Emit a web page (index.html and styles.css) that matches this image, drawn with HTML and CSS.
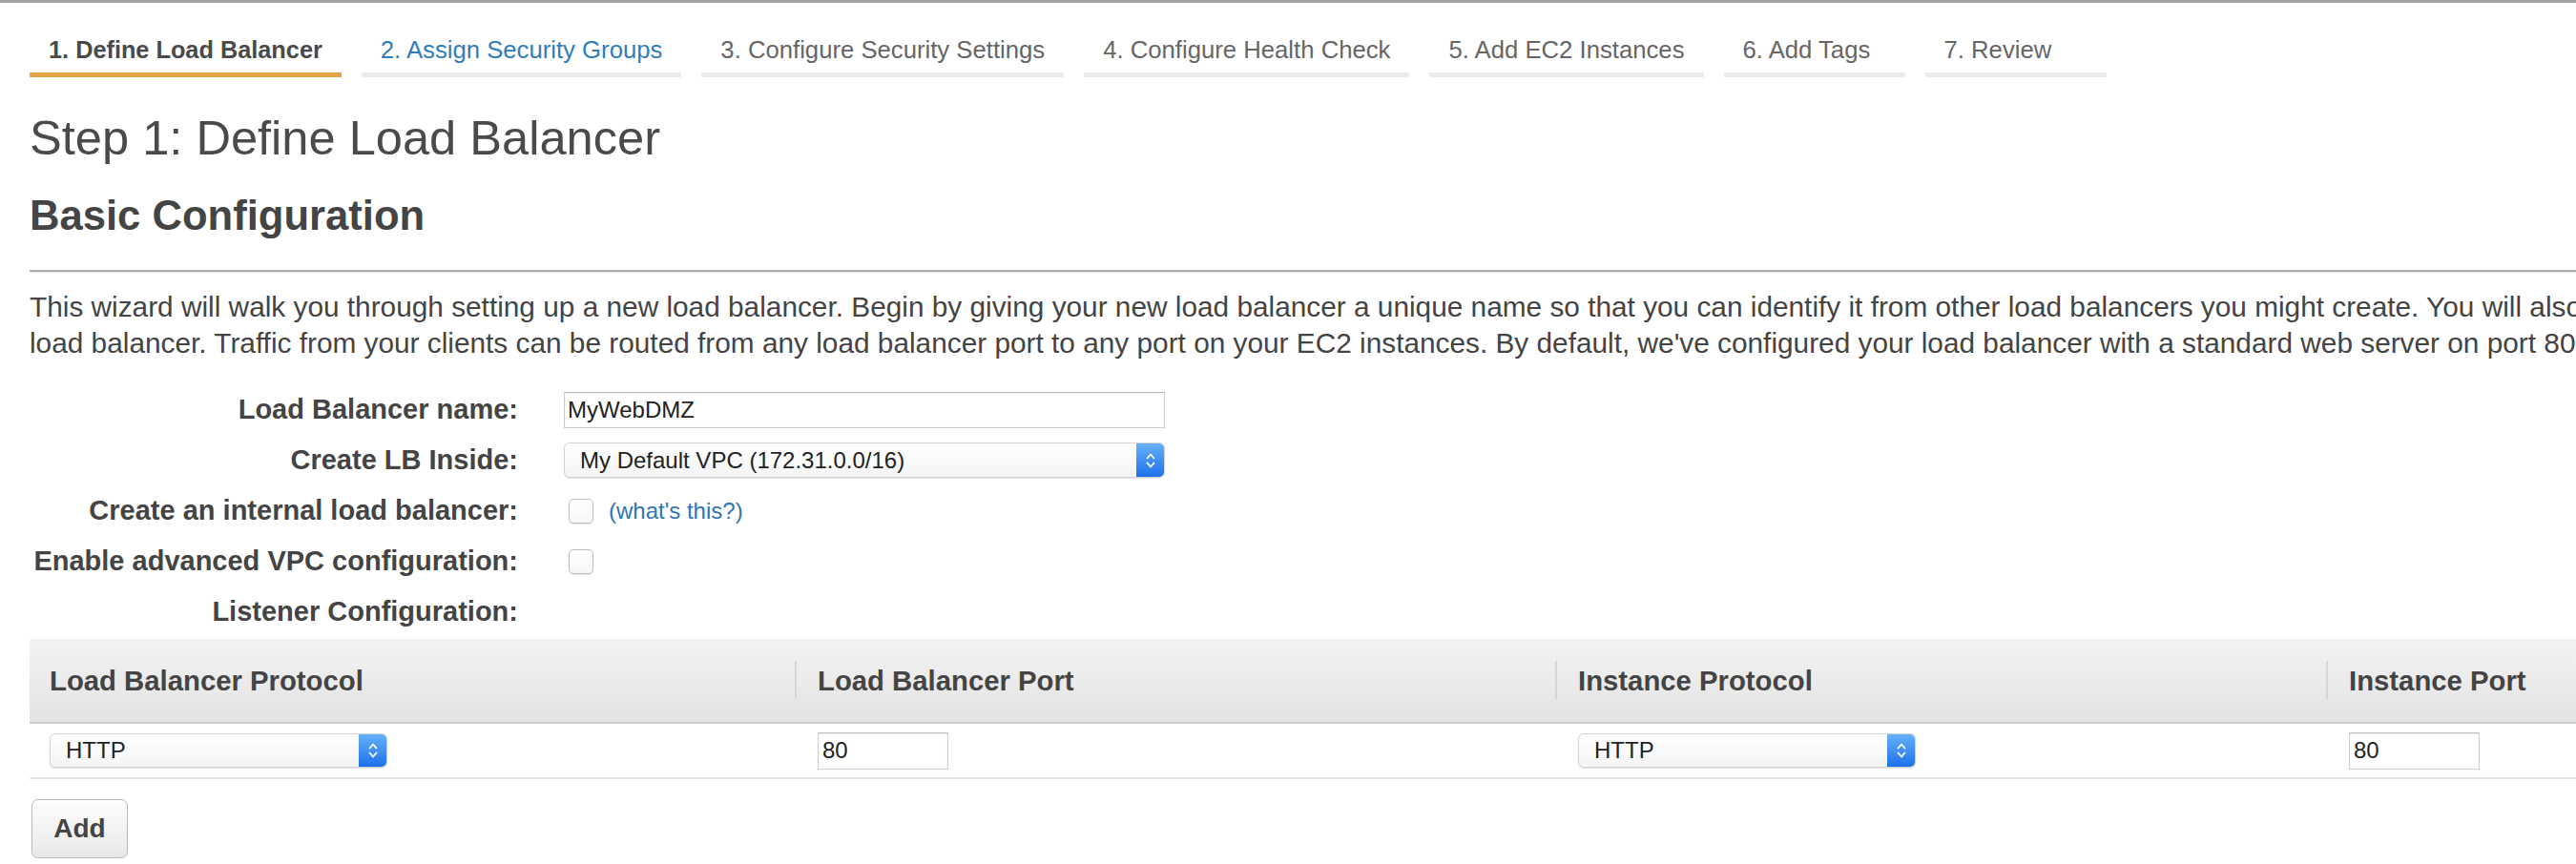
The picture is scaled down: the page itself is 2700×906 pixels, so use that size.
FILE: index.html
```html
<!DOCTYPE html>
<html lang="en">
<head>
<meta charset="utf-8">
<title>Define Load Balancer</title>
<link rel="stylesheet" href="styles.css">
</head>
<body>
<div class="topbar"></div>
<div class="page">
  <nav class="tabs">
    <div class="tab active">1. Define Load Balancer</div>
    <div class="tab link">2. Assign Security Groups</div>
    <div class="tab">3. Configure Security Settings</div>
    <div class="tab">4. Configure Health Check</div>
    <div class="tab">5. Add EC2 Instances</div>
    <div class="tab">6. Add Tags</div>
    <div class="tab">7. Review</div>
  </nav>

  <h1 class="title">Step 1: Define Load Balancer</h1>
  <h2 class="section-title">Basic Configuration</h2>
  <hr class="rule">

  <p class="intro">This wizard will walk you through setting up a new load balancer. Begin by giving your new load balancer a unique name so that you can identify it from other load balancers you might create. You will also need to configure ports and protocols for your<br>load balancer. Traffic from your clients can be routed from any load balancer port to any port on your EC2 instances. By default, we've configured your load balancer with a standard web server on port 80.</p>

  <div class="form">
    <label class="label" for="lbname">Load Balancer name:</label>
    <div class="control"><input id="lbname" class="textbox" type="text" value="MyWebDMZ"></div>

    <div class="label">Create LB Inside:</div>
    <div class="control">
      <div class="select wide"><span class="value">My Default VPC (172.31.0.0/16)</span><span class="stepper"><svg width="14" height="24" viewBox="0 0 14 24"><path d="M3.5 9.5 L7 5.5 L10.5 9.5 M3.5 14.5 L7 18.5 L10.5 14.5" fill="none" stroke="#fff" stroke-width="1.8" stroke-linecap="round" stroke-linejoin="round"/></svg></span></div>
    </div>

    <div class="label">Create an internal load balancer:</div>
    <div class="control"><input class="checkbox" type="checkbox"><a class="help" href="#">(what's this?)</a></div>

    <div class="label">Enable advanced VPC configuration:</div>
    <div class="control"><input class="checkbox" type="checkbox"></div>

    <div class="label">Listener Configuration:</div>
    <div class="control"></div>
  </div>

  <table class="listeners">
    <colgroup>
      <col class="c1"><col class="c2"><col class="c3"><col class="c4">
    </colgroup>
    <thead>
      <tr>
        <th>Load Balancer Protocol</th>
        <th>Load Balancer Port</th>
        <th>Instance Protocol</th>
        <th>Instance Port</th>
      </tr>
    </thead>
    <tbody>
      <tr>
        <td><div class="select small"><span class="value">HTTP</span><span class="stepper"><svg width="14" height="24" viewBox="0 0 14 24"><path d="M3.5 9.5 L7 5.5 L10.5 9.5 M3.5 14.5 L7 18.5 L10.5 14.5" fill="none" stroke="#fff" stroke-width="1.8" stroke-linecap="round" stroke-linejoin="round"/></svg></span></div></td>
        <td><input class="port" type="text" value="80"></td>
        <td><div class="select small"><span class="value">HTTP</span><span class="stepper"><svg width="14" height="24" viewBox="0 0 14 24"><path d="M3.5 9.5 L7 5.5 L10.5 9.5 M3.5 14.5 L7 18.5 L10.5 14.5" fill="none" stroke="#fff" stroke-width="1.8" stroke-linecap="round" stroke-linejoin="round"/></svg></span></div></td>
        <td><input class="port" type="text" value="80"></td>
      </tr>
    </tbody>
  </table>

  <button class="btn" type="button">Add</button>
</div>
</body>
</html>
```

FILE: styles.css
```css
html, body {
  margin: 0;
  padding: 0;
  background: #fff;
}

body {
  overflow: hidden;
  font-family: "Liberation Sans", Arial, sans-serif;
  color: #444;
}

.topbar {
  height: 3px;
  background: #a3a3a3;
}

.page {
  width: 2900px;
  padding-left: 31px;
  box-sizing: border-box;
}

/* wizard tabs */
.tabs {
  display: flex;
  gap: 21px;
  padding-top: 34px;
}

.tab {
  box-sizing: border-box;
  min-width: 190px;
  padding: 0 20px 9px;
  font-size: 25.7px;
  line-height: 30px;
  color: #666;
  border-bottom: 5px solid #ebebeb;
  white-space: nowrap;
}

.tab.active {
  color: #4a4a4a;
  font-weight: bold;
  font-size: 25.3px;
  border-bottom-color: #e8a444;
}

.tab.link {
  color: #2f7dbd;
}

/* headings */
.title {
  margin: 34px 0 0;
  font-size: 50.6px;
  line-height: 60px;
  font-weight: normal;
  color: #4a4a4a;
}

.section-title {
  margin: 25px 0 0;
  font-size: 43.6px;
  line-height: 52px;
  font-weight: bold;
  color: #444;
}

.rule {
  margin: 31px 0 0;
  height: 0;
  border: 0;
  border-top: 2px solid #adadad;
  border-bottom: 1px solid #e2e2e2;
}

.intro {
  margin: 17px 0 0;
  font-size: 29.8px;
  line-height: 38px;
  white-space: nowrap;
  color: #444;
}

/* form */
.form {
  margin-top: 24px;
  display: grid;
  grid-template-columns: 512px auto;
  column-gap: 48px;
  grid-auto-rows: 53px;
  align-items: center;
}

.label {
  text-align: right;
  font-size: 29px;
  font-weight: bold;
  color: #444;
  white-space: nowrap;
}

.control {
  display: flex;
  align-items: center;
  gap: 16px;
}

.textbox {
  box-sizing: border-box;
  width: 630px;
  height: 38px;
  margin: 0;
  padding: 0 3px;
  border: 1px solid #cdcdcd;
  border-top-color: #b9b9b9;
  border-radius: 0;
  box-shadow: inset 0 1px 2px rgba(0, 0, 0, 0.08);
  font: 24px "Liberation Sans", Arial, sans-serif;
  color: #222;
  background: #fff;
}

.select {
  box-sizing: border-box;
  display: flex;
  align-items: stretch;
  height: 37px;
  border: 1px solid #d2d2d2;
  border-radius: 6px;
  background: linear-gradient(#ffffff, #f4f4f4);
  box-shadow: 0 1px 1px rgba(0, 0, 0, 0.12);
  font-size: 24px;
  color: #222;
  overflow: hidden;
}

.select.wide {
  width: 630px;
}

.select.small {
  width: 354px;
  height: 36px;
}

.select .value {
  flex: 1;
  display: flex;
  align-items: center;
  padding-left: 16px;
  white-space: nowrap;
}

.stepper {
  width: 29px;
  display: flex;
  align-items: center;
  justify-content: center;
  background: linear-gradient(#66b0fa, #1d72ea);
}

.checkbox {
  appearance: none;
  -webkit-appearance: none;
  box-sizing: border-box;
  width: 26px;
  height: 26px;
  margin: 0 0 0 5px;
  border: 1px solid #bcbcbc;
  border-radius: 5px;
  background: linear-gradient(#ffffff, #f7f7f7);
  box-shadow: 0 1px 1px rgba(0, 0, 0, 0.1);
}

.help {
  font-size: 24px;
  color: #2f75b0;
  text-decoration: none;
}

/* listeners table */
.listeners {
  margin-top: 2px;
  width: 100%;
  table-layout: fixed;
  border-collapse: collapse;
}

.listeners .c1 { width: 802px; }
.listeners .c2 { width: 797px; }
.listeners .c3 { width: 808px; }

.listeners th {
  position: relative;
  box-sizing: border-box;
  height: 88px;
  padding: 0 0 0 21px;
  text-align: left;
  font-size: 29.3px;
  font-weight: bold;
  color: #444;
  background: linear-gradient(#f3f3f3, #e3e3e3);
  border-bottom: 2px solid #cdcdcd;
  white-space: nowrap;
}

.listeners th + th {
  padding-left: 24px;
}

.listeners th + th::before {
  content: "";
  position: absolute;
  left: 0;
  top: 23px;
  width: 2px;
  height: 40px;
  background: #d6d6d6;
}

.listeners td {
  box-sizing: border-box;
  height: 58px;
  padding: 0 0 0 21px;
  border-bottom: 2px solid #e4e4e4;
  vertical-align: middle;
}

.listeners td + td {
  padding-left: 24px;
}

.port {
  box-sizing: border-box;
  width: 137px;
  height: 39px;
  margin: 0;
  padding: 0 4px;
  border: 1px solid #cfcfcf;
  border-top-color: #bdbdbd;
  border-radius: 0;
  box-shadow: inset 0 1px 2px rgba(0, 0, 0, 0.08);
  font: 24px "Liberation Sans", Arial, sans-serif;
  color: #222;
  background: #fff;
}

.btn {
  display: block;
  box-sizing: border-box;
  margin: 21px 0 0 2px;
  width: 101px;
  height: 62px;
  padding: 0;
  border: 1px solid #bababa;
  border-radius: 7px;
  background: linear-gradient(#fefefe, #e8e8e8);
  box-shadow: 0 1px 1px rgba(0, 0, 0, 0.08);
  font: bold 28px "Liberation Sans", Arial, sans-serif;
  color: #444;
}
```
